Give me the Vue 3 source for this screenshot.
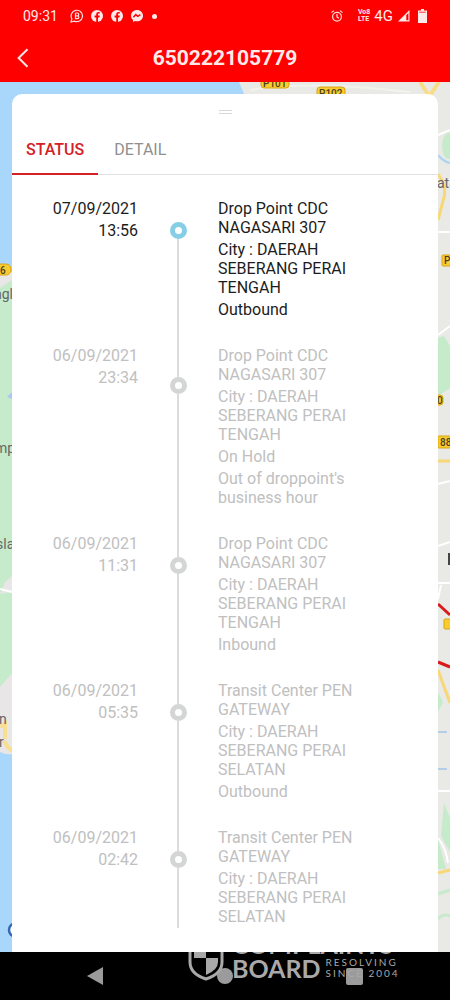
<template>
  <div class="screen">
    <header class="top">
      <div class="status-bar">
        <span class="clock">09:31</span>
        <div class="status-left">
          <svg class="ico" viewBox="0 0 14 14" aria-hidden="true">
            <path d="M1 13l.9-3.1A5.700 5.700 0 1 1 4.300 12.100Z" fill="none" stroke="#ffdcdc" stroke-width="1.200" />
            <path d="M5.500 4h1.800a1.400 1.400 0 0 1 0 2.900H5.500V4v5.700h2a1.400 1.400 0 0 0 0-2.800" fill="none" stroke="#ffdcdc" stroke-width="1.200" />
          </svg>
          <svg v-for="n in 2" :key="n" class="ico" viewBox="0 0 14 14" aria-hidden="true">
            <circle cx="7" cy="7" r="6" fill="#ffeaea" />
            <path d="M6.200 13.200V8.400H4.600V6.600h1.600V5.400c0-1.700.9-2.500 2.400-2.500h1.200v1.600H9c-.7 0-1 .3-1 1v1.100h1.800l-.3 1.800H8v4.800Z" fill="#f00" />
          </svg>
          <svg class="ico" viewBox="0 0 14 14" aria-hidden="true">
            <path d="M7 1C3.600 1 1 3.400 1 6.700c0 1.800.8 3.200 2 4.200V13l1.900-1c.7.200 1.400.3 2.100.3 3.400 0 6-2.400 6-5.600S10.400 1 7 1Z" fill="#ffeaea" />
            <path d="M3.400 8.300l2.400-2.700 2 1.700 2.600-1.600" fill="none" stroke="#f00" stroke-width="1.500" />
          </svg>
          <i class="more"></i>
        </div>
        <div class="status-right">
          <svg class="ico alarm" viewBox="0 0 14 14" aria-hidden="true">
            <g fill="none" stroke="#ffdcdc" stroke-width="1.200">
              <circle cx="7" cy="7.700" r="4.400" />
              <path d="M1.500 3.600L4 1.600M12.500 3.600L10 1.600M7 5v3l2 1.200" />
            </g>
          </svg>
          <span class="volte"><span>Vo8</span><span>LTE</span></span>
          <span class="net">4G</span>
          <svg class="ico signal" viewBox="0 0 12 12" aria-hidden="true">
            <path d="M0 11.500L11.500 0v11.500Z" fill="#ffeaea" />
            <path d="M8.300 5.200L10.400 3v7.300H8.300Z" fill="#f00" />
          </svg>
          <svg class="battery" viewBox="0 0 9 14" aria-hidden="true">
            <path d="M3 0h3v1.500h3V14H0V1.500h3Z" fill="#ffeaea" />
            <path d="M1.200 2.600h6.600v1.400H1.200Z" fill="#ff6a6a" />
          </svg>
        </div>
      </div>
      <div class="title-bar">
        <button class="back" type="button" aria-label="Back">
          <svg viewBox="0 0 12 20" aria-hidden="true">
            <path d="M10.500 1.200L1.600 10l8.900 8.800" fill="none" stroke="#ffe4e4" stroke-width="2" />
          </svg>
        </button>
        <h1>650222105779</h1>
      </div>
    </header>

    <main class="body">
      <svg class="map" viewBox="0 0 450 870" preserveAspectRatio="none" aria-hidden="true">
        <rect width="450" height="870" fill="#e9e9e6" />
        <path d="M0 0h239l6 14H12v176H0Z" fill="#a9d7fb" />
        <path d="M0 192h12v325H0Z" fill="#c5ebcb" />
        <path d="M0 517h12v155H0Z" fill="#c5ebcb" />
        <path d="M12 12h14v14H12Z" fill="#a9d7fb" />
        <path d="M0 192h12v6L0 206ZM5 500l7-6v16l-12 2ZM0 605l12-14v82H0Z" fill="#e8e6e6" />
        <path d="M0 507l12 3" stroke="#fff" stroke-width="2" />
        <path d="M0 645l5-3v15M4 659q3 6 8 10" fill="none" stroke="#f8df91" stroke-width="4" />
        <path d="M0 670q6 3 12 2v198H0Z" fill="#a9d7fb" />
        <path d="M7 315l5-5v7Z" fill="#a9c8f5" />
        <circle cx="16" cy="848" r="7" fill="#fff" stroke="#3568b5" stroke-width="2.500" />
        <path d="M250 8q60-10 160 2" fill="none" stroke="#f3f3ee" stroke-width="2" />
        <path d="M420 0l9 14M439 0l-10 15" fill="none" stroke="#f9dc87" stroke-width="4" />
        <ellipse cx="449" cy="64" rx="7" ry="13" fill="#c5ebcb" />
        <path d="M438 73q6 7 12 8" fill="none" stroke="#a9d3f2" stroke-width="2" />
        <path d="M438 53l12-5M438 150h12M438 253l12-9M438 402l12-3M438 464l12-4M438 501h12M438 517l3-14M438 709h12M438 756q8 10 10 25" fill="none" stroke="#fff" stroke-width="2" />
        <path d="M438 92q10 14 5 27l-5 19M438 379h12M438 588l12 33M438 791l12-3" fill="none" stroke="#f8d777" stroke-width="3" />
        <path d="M438 256l6-2 6 10v42l-12 8Z" fill="#c5ebcb" />
        <path d="M438 610l5 10-5 10ZM438 757v30h8Zm6-36l6 15v34l-9-16Z" fill="#c5ebcb" />
        <path d="M438 650h9M438 687h9" stroke="#b3cfe8" stroke-width="2" />
        <path d="M438 837q5-6 12-3M438 812l12-4" fill="none" stroke="#c5ebcb" stroke-width="3" />
        <path d="M438 522l12 11M438 580l12 5" stroke="#d91a1d" stroke-width="3" />
        <g fill="#f8cb2f" stroke="#d9a514" stroke-width="1">
          <rect x="261" y="-6" width="28" height="12" rx="3" />
          <rect x="317" y="5" width="28" height="12" rx="3" />
          <rect x="-10" y="182" width="21" height="11" rx="5" />
          <rect x="442" y="173" width="20" height="11" rx="1" />
          <rect x="430" y="313" width="13" height="10" rx="3" />
          <rect x="438" y="354" width="22" height="12" rx="1" />
          <rect x="444" y="537" width="16" height="10" rx="1" />
        </g>
        <g class="road">
          <text x="263" y="5">P101</text>
          <text x="319" y="15">P102</text>
          <text x="0" y="192">6</text>
          <text x="444" y="182">P</text>
          <text x="437" y="322">0</text>
          <text x="440" y="364">88</text>
        </g>
        <g class="place">
          <text x="-6" y="217">ngl</text>
          <text x="-5" y="371">mp</text>
          <text x="-4" y="467">sla</text>
          <text x="-1" y="642">n</text>
          <text x="-1" y="665">r</text>
          <text x="437" y="106">ata</text>
        </g>
        <path d="M449 471v12" stroke="#444" stroke-width="2" />
      </svg>

      <section class="sheet">
        <div class="grip"></div>
        <nav class="tabs">
          <button
            v-for="tab in tabs"
            :key="tab"
            type="button"
            class="tab"
            :class="{ active: tab === activeTab }"
            @click="activeTab = tab"
          >{{ tab }}</button>
        </nav>
        <ol class="timeline">
          <li v-for="(ev, idx) in events" :key="idx" class="event" :class="{ latest: idx === 0 }">
            <div class="when">
              <span>{{ ev.date }}</span>
              <span>{{ ev.time }}</span>
            </div>
            <div class="rail">
              <i class="line before"></i>
              <i class="dot"></i>
              <i class="line after"></i>
            </div>
            <div class="info">
              <p v-for="text in ev.texts" :key="text">{{ text }}</p>
            </div>
          </li>
        </ol>
      </section>
    </main>

    <footer class="nav-bar">
      <button type="button" aria-label="Back">
        <svg viewBox="0 0 18 20" aria-hidden="true"><path d="M17 1v18L1 10Z" fill="#9b9b9b" /></svg>
      </button>
      <button type="button" aria-label="Home">
        <svg viewBox="0 0 18 20" aria-hidden="true"><circle cx="9" cy="10" r="8" fill="#9b9b9b" /></svg>
      </button>
      <button type="button" aria-label="Recents">
        <svg viewBox="0 0 18 20" aria-hidden="true"><rect x="0" y="2" width="17" height="17" rx="2" fill="#9b9b9b" /></svg>
      </button>
      <div class="watermark">
        <svg class="shield" viewBox="0 0 36 48" aria-hidden="true">
          <path d="M2 5q9 0 16-4 7 4 16 4v24q0 12-16 17Q2 41 2 29Z" fill="none" stroke="#a9a9a9" stroke-width="3" />
          <path d="M6 9q7-1 12-4v20H6ZM18 25h12v4q0 8-12 13Z" fill="#a9a9a9" />
        </svg>
        <div class="brand">
          <span class="name">COMPLAINTS</span>
          <div class="brand-row">
            <span class="name">BOARD</span>
            <span class="motto"><span>RESOLVING</span><span>SINCE 2004</span></span>
          </div>
        </div>
      </div>
    </footer>
  </div>
</template>

<script setup>
import { ref } from 'vue'

const tabs = ['STATUS', 'DETAIL']
const activeTab = ref('STATUS')

const events = [
  {
    date: '07/09/2021',
    time: '13:56',
    texts: ['Drop Point CDC NAGASARI 307', 'City : DAERAH SEBERANG PERAI TENGAH', 'Outbound']
  },
  {
    date: '06/09/2021',
    time: '23:34',
    texts: ['Drop Point CDC NAGASARI 307', 'City : DAERAH SEBERANG PERAI TENGAH', 'On Hold', "Out of droppoint's business hour"]
  },
  {
    date: '06/09/2021',
    time: '11:31',
    texts: ['Drop Point CDC NAGASARI 307', 'City : DAERAH SEBERANG PERAI TENGAH', 'Inbound']
  },
  {
    date: '06/09/2021',
    time: '05:35',
    texts: ['Transit Center PEN GATEWAY', 'City : DAERAH SEBERANG PERAI SELATAN', 'Outbound']
  },
  {
    date: '06/09/2021',
    time: '02:42',
    texts: ['Transit Center PEN GATEWAY', 'City : DAERAH SEBERANG PERAI SELATAN']
  }
]
</script>

<style>
body { margin: 0; background: #000; }
</style>

<style scoped>
.screen {
  display: flex;
  flex-direction: column;
  height: 100vh;
  font-family: Roboto, "Liberation Sans", sans-serif;
  font-size: 16px;
  overflow: hidden;
}
button { padding: 0; border: 0; background: none; font: inherit; cursor: pointer; }

/* header */
.top { background: #f00; color: #ffeaea; padding-bottom: 2px; }
.status-bar { display: flex; align-items: center; height: 32px; padding: 0 23px; font-size: 14px; }
.status-left { display: flex; align-items: center; gap: 6px; margin-left: 12px; }
.status-right { display: flex; align-items: center; margin-left: auto; }
.ico { display: block; width: 14px; height: 14px; }
.more { width: 5px; height: 5px; border-radius: 50%; background: #ffeaea; margin-left: 2px; }
.alarm { margin-right: 14px; }
.volte { display: flex; flex-direction: column; font-size: 7px; line-height: 7px; font-weight: 700; margin-right: 4px; }
.net { font-size: 15px; line-height: 20px; margin-right: 5px; }
.signal { width: 12px; height: 12px; margin-right: 8px; }
.battery { width: 9px; height: 14px; }
.title-bar { display: grid; grid-template-columns: 44px 1fr 44px; align-items: center; height: 48px; padding-top: 4px; box-sizing: border-box; }
.back { height: 44px; padding-left: 17px; text-align: left; }
.back svg { display: block; width: 12px; height: 20px; }
h1 { margin: 0; font-size: 21px; font-weight: 700; text-align: center; }

/* map + sheet */
.body { position: relative; flex: 1; min-height: 0; display: flex; padding: 12px 12px 0; background: #e9e9e6; }
.map { position: absolute; inset: 0; width: 100%; height: 100%; }
.road { font-size: 10px; font-weight: 500; fill: #4a4020; }
.place { font-size: 14px; fill: #666; }
.sheet {
  position: relative;
  flex: 1;
  min-width: 0;
  display: flex;
  flex-direction: column;
  padding-bottom: 24px;
  background: #fff;
  border-radius: 10px 10px 0 0;
}
.grip { width: 13px; height: 4px; margin: 16px auto 10px; border: 1px solid #d8d8d8; border-width: 1px 0; box-sizing: border-box; }
.tabs { display: flex; gap: 2px; height: 51px; border-bottom: 1px solid #e0e0e0; box-sizing: border-box; }
.tab { padding: 2px 14px 0; border-bottom: 2px solid transparent; color: #8f8f8f; margin-bottom: -1px; }
.tab.active { color: #d32027; border-color: #d32027; font-weight: 500; }

.timeline { flex: 1; min-height: 0; margin: 0; padding: 24px 0 0; list-style: none; overflow: hidden; }
.event { display: grid; grid-template-columns: 126px 80px 1fr; min-height: 147px; line-height: 19px; color: #c0c0c0; }
.event.latest { color: #1c1c1c; }
.when { display: flex; flex-direction: column; align-items: flex-end; gap: 3px; }
.rail { display: flex; flex-direction: column; align-items: center; }
.line { width: 2px; background: #dcdcdc; }
.before { flex: 18; }
.after { flex: 82; }
.latest .before { background: none; }
.dot { width: 17px; height: 17px; border: 5px solid #d4d6d6; border-radius: 50%; box-sizing: border-box; }
.latest .dot { border-color: #86cee6; }
.info { display: flex; flex-direction: column; gap: 3px; max-width: 144px; padding-bottom: 27px; }
.info p { margin: 0; }

/* system navigation */
.nav-bar { position: relative; display: flex; justify-content: center; gap: 112px; height: 48px; background: #000; overflow: hidden; }
.nav-bar button { width: 18px; }
.nav-bar svg { display: block; width: 18px; height: 20px; }
.watermark { position: absolute; left: 188px; bottom: 19px; display: flex; align-items: flex-end; gap: 8px; color: #a9a9a9; pointer-events: none; }
.nav-bar .shield { width: 36px; height: 48px; }
.brand { font-family: Lato, sans-serif; padding-bottom: 1px; }
.name { display: block; font-size: 25px; line-height: 24px; font-weight: 700; }
.brand-row { display: flex; align-items: center; gap: 5px; }
.motto { display: flex; flex-direction: column; font-size: 10px; line-height: 11px; letter-spacing: 2px; }
</style>
